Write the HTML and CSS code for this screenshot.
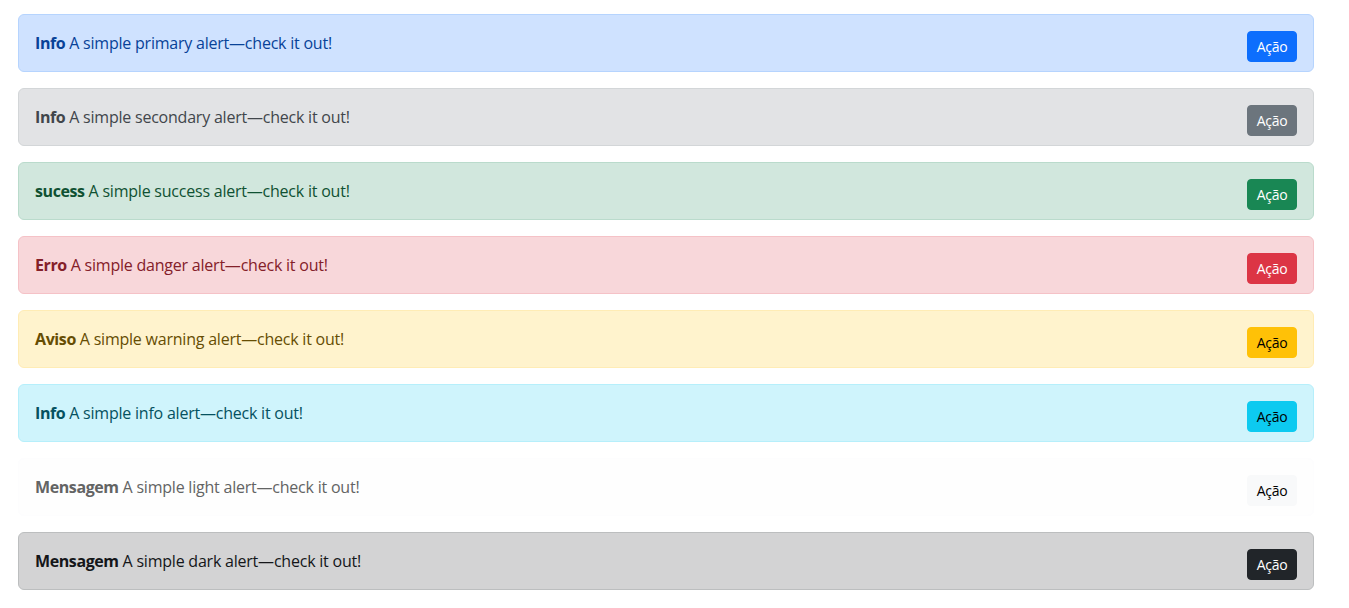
FILE: index.html
```html
<!DOCTYPE html>
<html lang="pt">
<head>
<meta charset="utf-8">
<title>Alerts</title>
<link rel="stylesheet" href="styles.css">
</head>
<body>
<main class="page">
  <div class="alert alert-primary"><span class="msg"><strong>Info</strong> A simple primary alert—check it out!</span><button class="btn btn-primary">Ação</button></div>
  <div class="alert alert-secondary"><span class="msg"><strong>Info</strong> A simple secondary alert—check it out!</span><button class="btn btn-secondary">Ação</button></div>
  <div class="alert alert-success"><span class="msg"><strong>sucess</strong> A simple success alert—check it out!</span><button class="btn btn-success">Ação</button></div>
  <div class="alert alert-danger"><span class="msg"><strong>Erro</strong> A simple danger alert—check it out!</span><button class="btn btn-danger">Ação</button></div>
  <div class="alert alert-warning"><span class="msg"><strong>Aviso</strong> A simple warning alert—check it out!</span><button class="btn btn-warning">Ação</button></div>
  <div class="alert alert-info"><span class="msg"><strong>Info</strong> A simple info alert—check it out!</span><button class="btn btn-info">Ação</button></div>
  <div class="alert alert-light"><span class="msg"><strong>Mensagem</strong> A simple light alert—check it out!</span><button class="btn btn-light">Ação</button></div>
  <div class="alert alert-dark"><span class="msg"><strong>Mensagem</strong> A simple dark alert—check it out!</span><button class="btn btn-dark">Ação</button></div>
</main>
</body>
</html>
```
FILE: styles.css
```css
* { box-sizing: border-box; }
body {
  margin: 0;
  font-family: "Open Sans", "Noto Sans", sans-serif;
  font-size: 16px;
  line-height: 1.5;
  color: #212529;
  background: #fff;
}
.page {
  padding: 14px 35px 0 18px;
}
.alert {
  height: 58px;
  margin-bottom: 16px;
  padding: 16px;
  border: 1px solid transparent;
  border-radius: 6px;
  display: flex;
  align-items: flex-start;
  justify-content: space-between;
}
.msg {
  letter-spacing: -0.22px;
  line-height: 24px;
}
.msg strong { font-weight: 700; letter-spacing: -0.4px; }
.btn {
  flex: none;
  width: 50px;
  height: 31px;
  padding: 4px 0;
  font-family: "Open Sans", "Noto Sans", sans-serif;
  font-size: 14px;
  line-height: 21px;
  letter-spacing: -0.3px;
  border: 1px solid transparent;
  border-radius: 4px;
  color: #fff;
  text-align: center;
  cursor: pointer;
}
.alert-primary { color: #084298; background: #cfe2ff; border-color: #b6d4fe; }
.alert-secondary { color: #41464b; background: #e2e3e5; border-color: #d3d6d8; }
.alert-success { color: #0f5132; background: #d1e7dd; border-color: #badbcc; }
.alert-danger { color: #842029; background: #f8d7da; border-color: #f5c2c7; }
.alert-warning { color: #664d03; background: #fff3cd; border-color: #ffecb5; }
.alert-info { color: #055160; background: #cff4fc; border-color: #b6effb; }
.alert-light { color: #636464; background: #fefefe; border-color: #fdfdfe; }
.alert-dark { color: #141619; background: #d3d3d4; border-color: #bcbebf; }

.btn-primary { background: #0d6efd; border-color: #0d6efd; }
.btn-secondary { background: #6c757d; border-color: #6c757d; }
.btn-success { background: #198754; border-color: #198754; }
.btn-danger { background: #dc3545; border-color: #dc3545; }
.btn-warning { background: #ffc107; border-color: #ffc107; color: #000; }
.btn-info { background: #0dcaf0; border-color: #0dcaf0; color: #000; }
.btn-light { background: #f8f9fa; border-color: #f8f9fa; color: #000; }
.btn-dark { background: #212529; border-color: #212529; }
```
